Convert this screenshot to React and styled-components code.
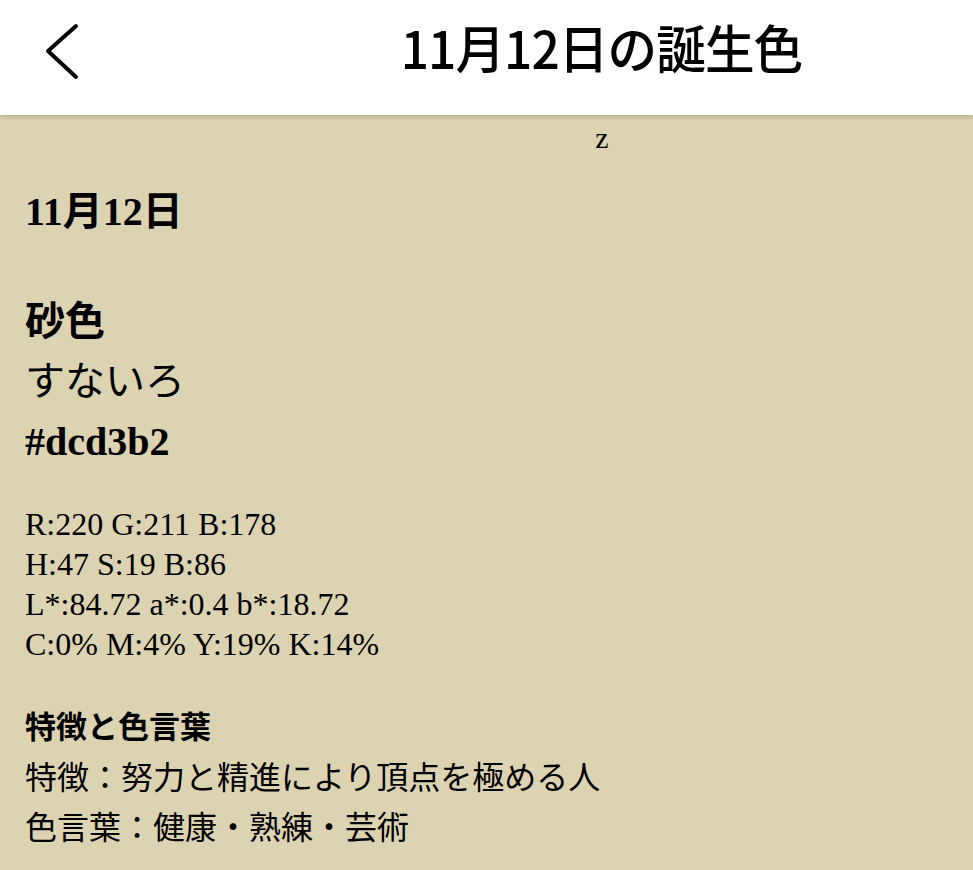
import React from 'react'
import styled, { createGlobalStyle } from 'styled-components'

const GlobalStyle = createGlobalStyle`
  html, body {
    margin: 0;
    padding: 0;
    background: #dcd3b2;
  }
  * {
    box-sizing: border-box;
  }
`;

const Page = styled.div`
  min-height: 870px;
  background: #dcd3b2;
  color: #000;
`;

const Header = styled.header`
  height: 115px;
  background: #fff;
  display: grid;
  grid-template-columns: 230px 1fr;
  align-items: center;
  box-shadow: 0 2px 5px rgba(0, 0, 0, 0.18);
  position: relative;
  z-index: 1;
`;

const BackButton = styled.button`
  border: none;
  background: none;
  padding: 0;
  margin-left: 43px;
  width: 40px;
  height: 58px;
  display: flex;
  align-items: center;
  cursor: pointer;
  align-self: start;
  margin-top: 23px;
`;

const Title = styled.h1`
  margin: 0;
  text-align: center;
  font-family: "Noto Sans CJK JP", "Noto Sans", sans-serif;
  font-weight: 500;
  font-size: 52px;
  letter-spacing: -1px;
  line-height: 1;
  color: #000;
  transform: scaleX(0.955);
  margin-top: -22px;
`;

const Content = styled.main`
  padding: 3px 25px 0;
  font-family: "Liberation Serif", "Noto Sans CJK JP", serif;
`;

const Stray = styled.div`
  margin-left: 231px;
  text-align: center;
  font-size: 30px;
  line-height: 40px;
`;

const DateTitle = styled.h2`
  margin: 24px 0 0;
  font-size: 40px;
  font-weight: 700;
  line-height: 60px;
`;

const NameBlock = styled.div`
  margin-top: 50px;
  font-size: 40px;
  line-height: 60px;
`;

const NameLine = styled.div`
  font-weight: ${p => (p.$bold ? 700 : 400)};
`;

const Values = styled.div`
  margin-top: 32px;
  font-size: 32px;
  line-height: 40px;
`;

const Notes = styled.section`
  margin-top: 36px;
  font-family: "Noto Sans CJK JP", "Noto Sans", sans-serif;
  font-size: 32px;
  line-height: 50px;
`;

const NotesHeading = styled.h3`
  margin: 0;
  font-size: 31px;
  font-weight: 700;
  line-height: 50px;
`;

const NoteLine = styled.div`
  white-space: pre;
`;

const values = [
  'R:220 G:211 B:178',
  'H:47 S:19 B:86',
  'L*:84.72 a*:0.4 b*:18.72',
  'C:0% M:4% Y:19% K:14%',
];

export default function App() {
  return (
    <>
      <GlobalStyle />
      <Page>
        <Header>
          <BackButton aria-label="戻る">
            <svg width="40" height="58" viewBox="0 0 40 58">
              <polyline
                points="33,3 5,28 33,54"
                fill="none"
                stroke="#000"
                strokeWidth="4"
                strokeLinecap="round"
                strokeLinejoin="round"
              />
            </svg>
          </BackButton>
          <Title>11月12日の誕生色</Title>
        </Header>
        <Content>
          <Stray>z</Stray>
          <DateTitle>11月12日</DateTitle>
          <NameBlock>
            <NameLine $bold>砂色</NameLine>
            <NameLine>すないろ</NameLine>
            <NameLine $bold>#dcd3b2</NameLine>
          </NameBlock>
          <Values>
            {values.map(v => (
              <div key={v}>{v}</div>
            ))}
          </Values>
          <Notes>
            <NotesHeading>特徴と色言葉</NotesHeading>
            <NoteLine>特徴：努力と精進により頂点を極める人</NoteLine>
            <NoteLine>色言葉：健康・熟練・芸術</NoteLine>
          </Notes>
        </Content>
      </Page>
    </>
  )
}
